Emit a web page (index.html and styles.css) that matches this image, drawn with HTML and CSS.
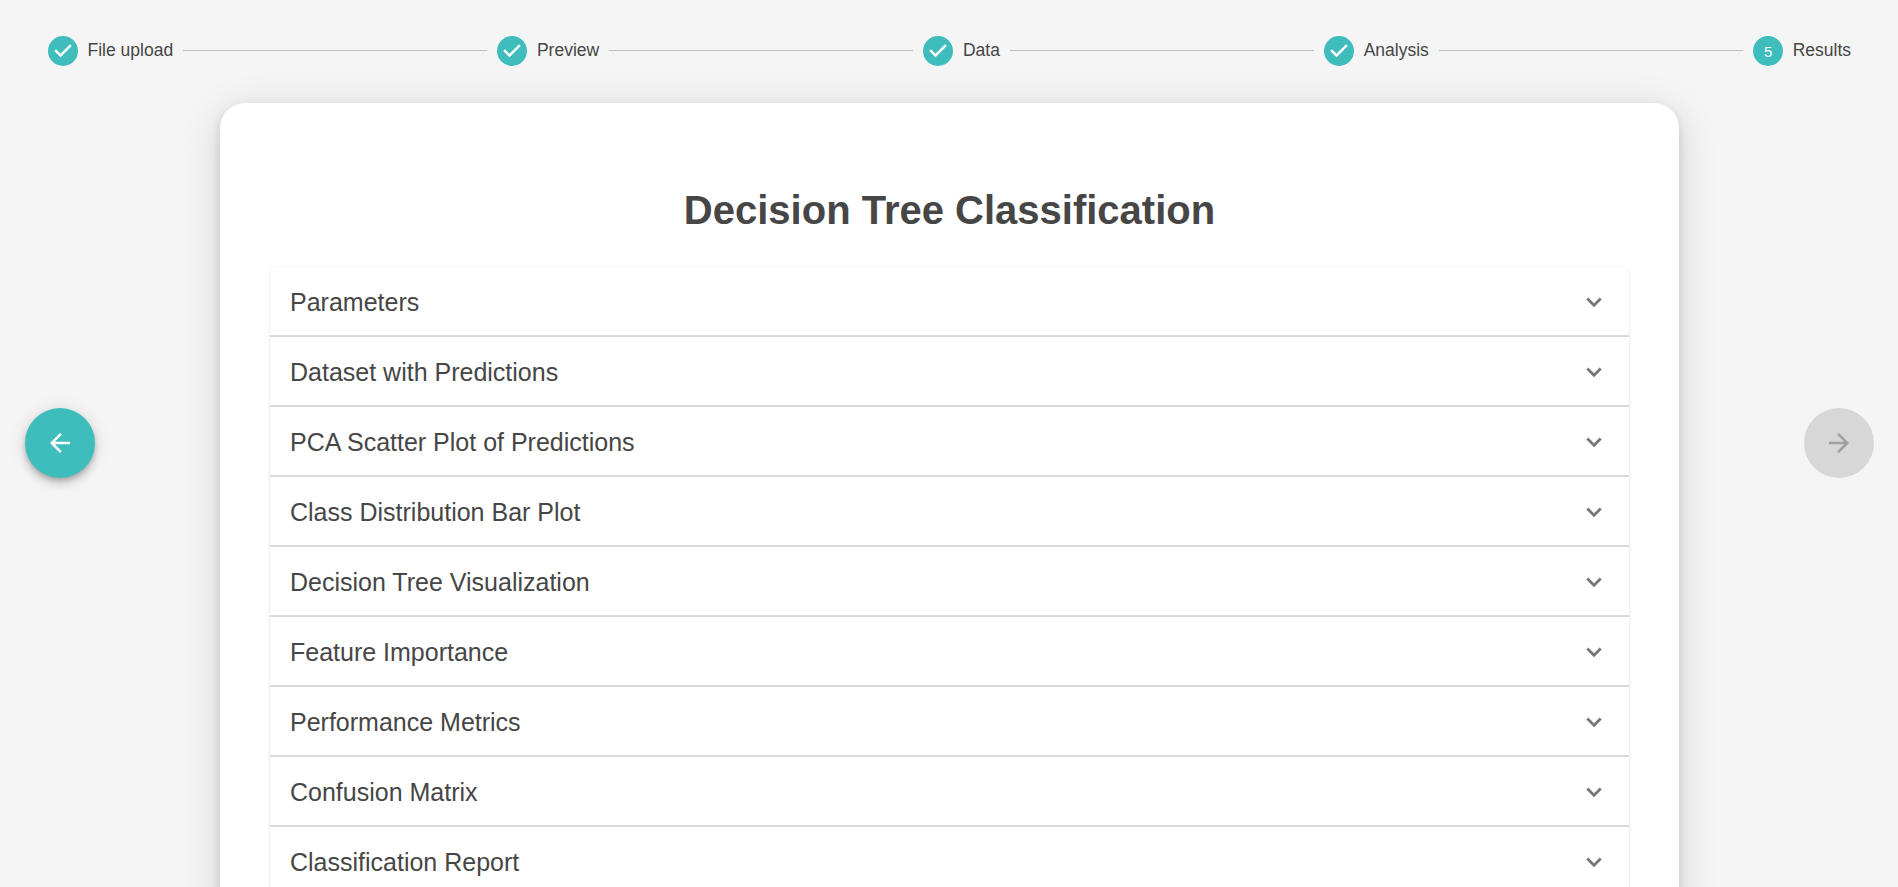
FILE: index.html
```html
<!DOCTYPE html>
<html lang="en">
<head>
<meta charset="utf-8">
<title>Decision Tree Classification</title>
<link rel="stylesheet" href="styles.css">
</head>
<body>
<svg class="defs" aria-hidden="true">
  <symbol id="check" viewBox="0 0 24 24"><circle cx="12" cy="12" r="9" fill="#fff"/><path d="M12 0a12 12 0 1 0 0 24 12 12 0 0 0 0-24zm-2 17l-5-5 1.4-1.4 3.6 3.6 7.6-7.6L19 8l-9 9z"/></symbol>
  <symbol id="chevron" viewBox="0 0 24 24"><path d="M16.59 8.59 12 13.17 7.41 8.59 6 10l6 6 6-6z"/></symbol>
  <symbol id="back" viewBox="0 0 24 24"><path d="M20 11H7.83l5.59-5.59L12 4l-8 8 8 8 1.41-1.41L7.83 13H20v-2z"/></symbol>
  <symbol id="forward" viewBox="0 0 24 24"><path d="m12 4-1.41 1.41L16.17 11H4v2h12.17l-5.58 5.59L12 20l8-8z"/></symbol>
</svg>

<nav class="stepper">
  <div class="step"><svg class="step-icon"><use href="#check"/></svg><span class="step-label">File upload</span></div>
  <span class="connector"></span>
  <div class="step"><svg class="step-icon"><use href="#check"/></svg><span class="step-label">Preview</span></div>
  <span class="connector"></span>
  <div class="step"><svg class="step-icon"><use href="#check"/></svg><span class="step-label">Data</span></div>
  <span class="connector"></span>
  <div class="step"><svg class="step-icon"><use href="#check"/></svg><span class="step-label">Analysis</span></div>
  <span class="connector"></span>
  <div class="step"><span class="step-number">5</span><span class="step-label">Results</span></div>
</nav>

<main class="card">
  <h1 class="title">Decision Tree Classification</h1>
  <div class="accordions">
    <section class="accordion"><span>Parameters</span><svg class="chevron"><use href="#chevron"/></svg></section>
    <section class="accordion"><span>Dataset with Predictions</span><svg class="chevron"><use href="#chevron"/></svg></section>
    <section class="accordion"><span>PCA Scatter Plot of Predictions</span><svg class="chevron"><use href="#chevron"/></svg></section>
    <section class="accordion"><span>Class Distribution Bar Plot</span><svg class="chevron"><use href="#chevron"/></svg></section>
    <section class="accordion"><span>Decision Tree Visualization</span><svg class="chevron"><use href="#chevron"/></svg></section>
    <section class="accordion"><span>Feature Importance</span><svg class="chevron"><use href="#chevron"/></svg></section>
    <section class="accordion"><span>Performance Metrics</span><svg class="chevron"><use href="#chevron"/></svg></section>
    <section class="accordion"><span>Confusion Matrix</span><svg class="chevron"><use href="#chevron"/></svg></section>
    <section class="accordion"><span>Classification Report</span><svg class="chevron"><use href="#chevron"/></svg></section>
  </div>
</main>

<button class="fab fab-back" aria-label="Back"><svg><use href="#back"/></svg></button>
<button class="fab fab-next" aria-label="Next" disabled><svg><use href="#forward"/></svg></button>
</body>
</html>
```
FILE: styles.css
```css
* { box-sizing: border-box; }

html, body { height: 100%; }

body {
  margin: 0;
  overflow: hidden;
  background: #f5f5f5;
  color: #464646;
  font-family: "Liberation Sans", Arial, sans-serif;
}

svg { display: block; fill: currentColor; }

.defs { position: absolute; width: 0; height: 0; }

.stepper {
  display: flex;
  align-items: center;
  height: 103px;
  padding: 0 47px 1px 48px;
}

.step {
  display: flex;
  align-items: center;
  gap: 9.5px;
}

.step-icon {
  width: 30px;
  height: 30px;
  color: #3fbdbd;
}

.step-number {
  width: 30px;
  height: 30px;
  border-radius: 50%;
  background: #3fbdbd;
  color: #fff;
  font-size: 15px;
  line-height: 31px;
  text-align: center;
}

.step-label {
  font-size: 17.5px;
  line-height: 25px;
  padding-bottom: 2px;
}

.connector {
  flex: 1;
  height: 1px;
  margin: 0 10px 2px;
  background: #bdbdbd;
}

.card {
  width: 1459px;
  margin: 0 0 0 220px;
  padding: 78px 50px 50px;
  border-radius: 25px;
  background: #fff;
  box-shadow: 0 5px 12px rgba(0,0,0,.12), 0 8px 40px rgba(0,0,0,.14);
}

.title {
  margin: 0 0 28px;
  font-size: 40px;
  line-height: 58px;
  text-align: center;
}

.accordion {
  display: flex;
  align-items: center;
  justify-content: space-between;
  height: 70px;
  padding: 2px 20px 0;
  border-bottom: 2px solid #dcdcdc;
  background: #fff;
  font-size: 25px;
  box-shadow: 0 2px 1px -1px rgba(0,0,0,.2), 0 1px 1px 0 rgba(0,0,0,.14), 0 1px 3px 0 rgba(0,0,0,.12);
}

.accordion:first-child { border-radius: 5px 5px 0 0; }

.chevron {
  width: 30px;
  height: 30px;
  padding-bottom: 0;
  color: #757575;
  stroke: currentColor;
  stroke-width: .3;
}

.fab {
  position: fixed;
  top: 408px;
  display: flex;
  align-items: center;
  justify-content: center;
  width: 70px;
  height: 70px;
  padding: 0;
  border: 0;
  border-radius: 50%;
}

.fab svg { width: 30px; height: 30px; }

.fab-back {
  left: 25px;
  background: #3fbdbd;
  color: #fff;
  box-shadow: 0 3px 5px -1px rgba(0,0,0,.2), 0 6px 10px 0 rgba(0,0,0,.14), 0 1px 18px 0 rgba(0,0,0,.12);
}

.fab-next {
  right: 24px;
  background: #d7d7d7;
  color: #9f9f9f;
}
```
